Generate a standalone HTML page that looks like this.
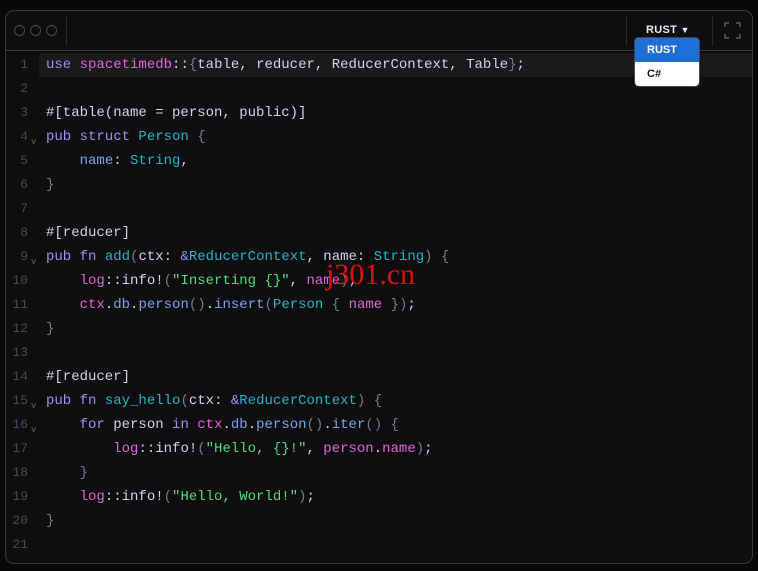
<!DOCTYPE html>
<html><head><style>
body{margin:0;width:758px;height:571px;background:#080809;overflow:hidden;font-family:"Liberation Mono",monospace;}
.frame{position:absolute;left:5px;top:10px;width:746px;height:552px;border:1px solid #3a3a3e;border-radius:9px;background:#0e0e10;overflow:hidden}
.hdr{position:absolute;left:0;top:0;right:0;height:39px;border-bottom:1px solid #3a3a3e}
.dot{position:absolute;top:14px;width:9px;height:9px;border:1px solid #4a4a4e;border-radius:50%}
.vl{position:absolute;top:5px;width:1px;height:30px;background:#2c2c30}
.rust{position:absolute;left:640px;top:13px;font:bold 11px "Liberation Sans",sans-serif;color:#e8e8ee;letter-spacing:.3px}
.code{position:absolute;left:0;top:42px;right:0}
.ln{position:relative;height:24px;line-height:24px;font-size:14px;white-space:pre;color:#d4d4e0}
.ln .n{position:absolute;left:0;width:22px;text-align:right;color:#4a4a50;font-size:13px}
.ln .c{position:absolute;left:40px}
.ln .f{position:absolute;left:25px;top:5px;font-size:9px;color:#6a6a70}
.hl{background:#1a1a1d;margin-left:33px}
.hl .n{left:-33px}.hl .c{left:7px}
.k{color:#a58af0}.m{color:#e264d6}.t{color:#22b4c8}.s{color:#4fdc7c}.g{color:#7a7a82}.b{color:#7aa2e8}
.dd{position:absolute;left:634px;top:37px;width:64px;height:48px;background:#fff;border-radius:5px;overflow:hidden;font:bold 11px "Liberation Sans",sans-serif;border:1px solid #444}
.dd div{height:24px;line-height:24px;padding-left:12px}
</style></head><body>
<div class="frame">
<div class="hdr">
<div class="dot" style="left:8px"></div><div class="dot" style="left:24px"></div><div class="dot" style="left:40px"></div>
<div class="vl" style="left:60px"></div><div class="vl" style="left:620px"></div><div class="vl" style="left:706px"></div>
<div class="rust">RUST <span style="font-size:9px">▼</span></div>
<svg style="position:absolute;left:718px;top:11px" width="17" height="17" fill="none" stroke="#5a5a60" stroke-width="1.5"><path d="M1 5V1H5M12 1H16V5M16 12V16H12M5 16H1V12"/></svg>
</div>
<div class="code">
<div class="ln hl"><span class="n">1</span><span class="c"><span class="k">use</span> <span class="m">spacetimedb</span>::<span class="g">{</span>table, reducer, ReducerContext, Table<span class="g">}</span>;</span></div>
<div class="ln"><span class="n">2</span></div>
<div class="ln"><span class="n">3</span><span class="c">#[table(name = person, public)]</span></div>
<div class="ln"><span class="n">4</span><span class="f">v</span><span class="c"><span class="k">pub struct</span> <span class="t">Person</span> <span class="g">{</span></span></div>
<div class="ln"><span class="n">5</span><span class="c">    <span class="b">name</span>: <span class="t">String</span>,</span></div>
<div class="ln"><span class="n">6</span><span class="c"><span class="g">}</span></span></div>
<div class="ln"><span class="n">7</span></div>
<div class="ln"><span class="n">8</span><span class="c">#[reducer]</span></div>
<div class="ln"><span class="n">9</span><span class="f">v</span><span class="c"><span class="k">pub fn</span> <span class="t">add</span><span class="g">(</span>ctx: <span class="k">&amp;</span><span class="t">ReducerContext</span>, name: <span class="t">String</span><span class="g">) {</span></span></div>
<div class="ln"><span class="n">10</span><span class="c">    <span class="m">log</span>::info!<span class="g">(</span><span class="s">"Inserting {}"</span>, <span class="m">name</span><span class="g">)</span>;</span></div>
<div class="ln"><span class="n">11</span><span class="c">    <span class="m">ctx</span>.<span class="b">db</span>.<span class="b">person</span><span class="g">()</span>.<span class="b">insert</span><span class="g">(</span><span class="t">Person</span> <span class="g">{</span> <span class="m">name</span> <span class="g">})</span>;</span></div>
<div class="ln"><span class="n">12</span><span class="c"><span class="g">}</span></span></div>
<div class="ln"><span class="n">13</span></div>
<div class="ln"><span class="n">14</span><span class="c">#[reducer]</span></div>
<div class="ln"><span class="n">15</span><span class="f">v</span><span class="c"><span class="k">pub fn</span> <span class="t">say_hello</span><span class="g">(</span>ctx: <span class="k">&amp;</span><span class="t">ReducerContext</span><span class="g">) {</span></span></div>
<div class="ln"><span class="n">16</span><span class="f">v</span><span class="c">    <span class="k">for</span> person <span class="k">in</span> <span class="m">ctx</span>.<span class="b">db</span>.<span class="b">person</span><span class="g">()</span>.<span class="b">iter</span><span class="g">() {</span></span></div>
<div class="ln"><span class="n">17</span><span class="c">        <span class="m">log</span>::info!<span class="g">(</span><span class="s">"Hello, {}!"</span>, <span class="m">person</span>.<span class="m">name</span><span class="g">)</span>;</span></div>
<div class="ln"><span class="n">18</span><span class="c">    <span class="g">}</span></span></div>
<div class="ln"><span class="n">19</span><span class="c">    <span class="m">log</span>::info!<span class="g">(</span><span class="s">"Hello, World!"</span><span class="g">)</span>;</span></div>
<div class="ln"><span class="n">20</span><span class="c"><span class="g">}</span></span></div>
<div class="ln"><span class="n">21</span></div>
</div>
</div>
<div class="dd"><div style="background:#1e6fd9;color:#fff">RUST</div><div style="color:#111">C#</div></div>
<div style="position:absolute;left:326px;top:258px;font:30px 'Liberation Serif',serif;color:#e01010">j301.cn</div>
</body></html>
